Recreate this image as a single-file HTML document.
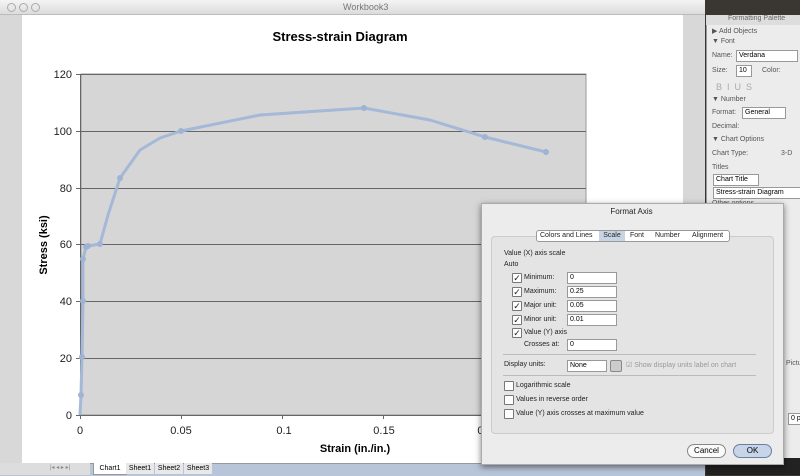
<!DOCTYPE html>
<html><head><meta charset="utf-8"><style>
body{margin:0;width:800px;height:475px;overflow:hidden;background:#3a3632;font-family:"Liberation Sans",Verdana,sans-serif;position:relative}
.a{position:absolute}
.t{font-size:8px;color:#222}
.cb{position:absolute;width:8px;height:8px;border:1px solid #777;background:#fff;border-radius:1px}
.ck{position:absolute;width:8px;height:8px;border:1px solid #777;background:#fff;border-radius:1px;font-size:9px;line-height:8px;text-align:center;color:#223}
.inp{position:absolute;background:#fff;border:1px solid #999;height:10px;font-size:7px;padding-left:2px;line-height:10px}
.p{font-size:7px;color:#555;position:absolute}
</style></head><body>
<!-- window -->
<div class="a" style="left:0;top:0;width:705px;height:475px;background:#d8d8d8"></div>
<div class="a" style="left:0;top:0;width:705px;height:14px;background:linear-gradient(#f4f4f4,#dcdcdc);border-bottom:1px solid #bbb"></div>
<div class="a" style="left:7px;top:3px;width:7px;height:7px;border:1px solid #aaa;border-radius:50%"></div>
<div class="a" style="left:19px;top:3px;width:7px;height:7px;border:1px solid #aaa;border-radius:50%"></div>
<div class="a" style="left:31px;top:3px;width:7px;height:7px;border:1px solid #aaa;border-radius:50%"></div>
<div class="a" style="left:343px;top:2px;font-size:9px;color:#777">Workbook3</div>
<div class="a" style="left:22px;top:15px;width:661px;height:448px;background:#fff"></div>
<svg class="a" style="left:0;top:0" width="705" height="475">
<rect x="81" y="74" width="505" height="341" fill="#d6d6d6" stroke="#999" stroke-width="1"/>
<g stroke="#666" stroke-width="1">
<line x1="76" y1="74.5" x2="586" y2="74.5"/><line x1="76" y1="131.5" x2="586" y2="131.5"/><line x1="76" y1="188.5" x2="586" y2="188.5"/><line x1="76" y1="244.5" x2="586" y2="244.5"/><line x1="76" y1="301.5" x2="586" y2="301.5"/><line x1="76" y1="358.5" x2="586" y2="358.5"/><line x1="76" y1="415.5" x2="586" y2="415.5"/>
<line x1="80.5" y1="74" x2="80.5" y2="419"/>
<line x1="181.5" y1="415" x2="181.5" y2="419"/><line x1="282.5" y1="415" x2="282.5" y2="419"/><line x1="383.5" y1="415" x2="383.5" y2="419"/><line x1="484.5" y1="415" x2="484.5" y2="419"/>
</g>
<polyline fill="none" stroke="#a4b8d8" stroke-width="3" stroke-linejoin="round" points="80,415 81,395 82,357 83,301 83,259 86,247 88,246 100,244 108,215 120,178 140,150 160,138 181,131 260,115 364,108 430,120 485,137 546,152"/>
<g fill="#9fb3d4">
<circle cx="81" cy="395" r="3"/><circle cx="82" cy="357" r="3"/><circle cx="83" cy="301" r="3"/><circle cx="83" cy="259" r="3"/><circle cx="86" cy="247" r="3"/><circle cx="88" cy="246" r="3"/><circle cx="100" cy="244" r="3"/><circle cx="120" cy="178" r="3"/><circle cx="181" cy="131" r="3"/><circle cx="364" cy="108" r="3"/><circle cx="485" cy="137" r="3"/><circle cx="546" cy="152" r="3"/>
</g>
<g font-family="Liberation Sans,sans-serif" font-size="11" fill="#222" text-anchor="end">
<text x="72" y="78">120</text><text x="72" y="135">100</text><text x="72" y="192">80</text><text x="72" y="248">60</text><text x="72" y="305">40</text><text x="72" y="362">20</text><text x="72" y="419">0</text>
</g>
<g font-family="Liberation Sans,sans-serif" font-size="11" fill="#222" text-anchor="middle">
<text x="80" y="434">0</text><text x="181" y="434">0.05</text><text x="284" y="434">0.1</text><text x="384" y="434">0.15</text><text x="485" y="434">0.2</text>
</g>
<text x="340" y="41" font-family="Liberation Sans,sans-serif" font-weight="bold" font-size="13" text-anchor="middle">Stress-strain Diagram</text>
<text x="355" y="452" font-family="Liberation Sans,sans-serif" font-weight="bold" font-size="11" text-anchor="middle">Strain (in./in.)</text>
<text transform="translate(47,245) rotate(-90)" font-family="Liberation Sans,sans-serif" font-weight="bold" font-size="11" text-anchor="middle">Stress (ksi)</text>
</svg>
<!-- tabs bar -->
<div class="a" style="left:0;top:463px;width:705px;height:12px;background:#b8c4d8;border-top:1px solid #999"></div>
<div class="a" style="left:0;top:463px;width:90px;height:12px;background:#ddd"></div>
<div class="a" style="left:50px;top:464px;font-size:6px;color:#888">|◂ ◂ ▸ ▸|</div>
<div class="a" style="left:93px;top:463px;width:32px;height:11px;background:#fff;font-size:7px;text-align:center;line-height:11px;border:1px solid #999;border-top:none">Chart1</div>
<div class="a" style="left:126px;top:463px;width:28px;height:11px;background:#e8e8e8;font-size:7px;text-align:center;line-height:11px">Sheet1</div>
<div class="a" style="left:155px;top:463px;width:28px;height:11px;background:#e8e8e8;font-size:7px;text-align:center;line-height:11px">Sheet2</div>
<div class="a" style="left:184px;top:463px;width:28px;height:11px;background:#e8e8e8;font-size:7px;text-align:center;line-height:11px">Sheet3</div>
<!-- palette -->
<div class="a" style="left:706px;top:15px;width:94px;height:460px;background:#ececec;border-left:1px solid #999"></div>
<div class="a" style="left:706px;top:15px;width:94px;height:10px;background:#ddd;font-size:7px;color:#666;padding-left:22px;box-sizing:border-box">Formatting Palette</div>
<div class="p" style="left:712px;top:27px">▶ Add Objects</div>
<div class="p" style="left:712px;top:38px">▼ Font</div>
<div class="p" style="left:712px;top:52px">Name:</div><div class="inp" style="left:736px;top:50px;width:58px">Verdana</div>
<div class="p" style="left:712px;top:67px">Size:</div><div class="inp" style="left:736px;top:65px;width:12px">10</div><div class="p" style="left:762px;top:67px">Color:</div>
<div class="p" style="left:716px;top:82px;font-size:9px;color:#aaa">B &nbsp;I &nbsp;U &nbsp;S</div>
<div class="p" style="left:712px;top:96px">▼ Number</div>
<div class="p" style="left:712px;top:109px">Format:</div><div class="inp" style="left:742px;top:107px;width:40px">General</div>
<div class="p" style="left:712px;top:123px">Decimal:</div>
<div class="p" style="left:712px;top:136px">▼ Chart Options</div>
<div class="p" style="left:712px;top:150px">Chart Type:</div><div class="p" style="left:781px;top:150px">3-D</div>
<div class="p" style="left:712px;top:164px">Titles</div>
<div class="inp" style="left:713px;top:174px;width:42px">Chart Title</div>
<div class="inp" style="left:713px;top:187px;width:84px">Stress-strain Diagram</div>
<div class="p" style="left:712px;top:200px">Other options</div>
<div class="p" style="left:786px;top:360px">Pictur</div>
<div class="inp" style="left:788px;top:413px;width:12px">0 p</div>
<div class="a" style="left:706px;top:458px;width:94px;height:17px;background:#222"></div>
<!-- dialog -->
<div class="a" style="left:481px;top:203px;width:301px;height:260px;background:#ececec;border:1px solid #aaa;box-shadow:0 2px 6px rgba(0,0,0,.5)"></div>
<div class="a" style="left:481px;top:207px;width:301px;text-align:center;font-size:8px;color:#222">Format Axis</div>
<div class="a" style="left:491px;top:236px;width:281px;height:196px;background:#e4e4e4;border:1px solid #ccc;border-radius:4px"></div>
<div class="a" style="left:536px;top:230px;width:192px;height:10px;background:#fff;border:1px solid #999;border-radius:3px;font-size:7px;line-height:10px;color:#222">
<span class="a" style="left:3px">Colors and Lines</span><span class="a" style="left:62px;width:26px;background:#c8d4e4;text-align:center">Scale</span><span class="a" style="left:93px">Font</span><span class="a" style="left:118px">Number</span><span class="a" style="left:155px">Alignment</span></div>
<div class="a t" style="left:504px;top:250px;font-size:7px">Value (X) axis scale</div>
<div class="a t" style="left:504px;top:261px;font-size:7px">Auto</div>
<div class="ck" style="left:512px;top:273px">✓</div><div class="a t" style="left:524px;top:274px;font-size:7px">Minimum:</div><div class="inp" style="left:567px;top:272px;width:46px">0</div>
<div class="ck" style="left:512px;top:287px">✓</div><div class="a t" style="left:524px;top:288px;font-size:7px">Maximum:</div><div class="inp" style="left:567px;top:286px;width:46px">0.25</div>
<div class="ck" style="left:512px;top:301px">✓</div><div class="a t" style="left:524px;top:302px;font-size:7px">Major unit:</div><div class="inp" style="left:567px;top:300px;width:46px">0.05</div>
<div class="ck" style="left:512px;top:315px">✓</div><div class="a t" style="left:524px;top:316px;font-size:7px">Minor unit:</div><div class="inp" style="left:567px;top:314px;width:46px">0.01</div>
<div class="ck" style="left:512px;top:328px">✓</div><div class="a t" style="left:524px;top:329px;font-size:7px">Value (Y) axis</div>
<div class="a t" style="left:524px;top:341px;font-size:7px">Crosses at:</div><div class="inp" style="left:567px;top:339px;width:46px">0</div>
<div class="a" style="left:503px;top:354px;width:253px;border-top:1px solid #bbb"></div>
<div class="a t" style="left:504px;top:361px;font-size:7px">Display units:</div><div class="inp" style="left:567px;top:360px;width:36px">None</div>
<div class="a" style="left:610px;top:360px;width:10px;height:10px;border:1px solid #888;background:#ccc;border-radius:2px"></div>
<div class="a" style="left:626px;top:361px;font-size:7px;color:#999">☑ Show display units label on chart</div>
<div class="a" style="left:503px;top:375px;width:253px;border-top:1px solid #bbb"></div>
<div class="cb" style="left:504px;top:381px"></div><div class="a t" style="left:516px;top:382px;font-size:7px">Logarithmic scale</div>
<div class="cb" style="left:504px;top:395px"></div><div class="a t" style="left:516px;top:396px;font-size:7px">Values in reverse order</div>
<div class="cb" style="left:504px;top:409px"></div><div class="a t" style="left:516px;top:410px;font-size:7px">Value (Y) axis crosses at maximum value</div>
<div class="a" style="left:687px;top:444px;width:37px;height:12px;border:1px solid #888;border-radius:7px;background:#fafafa;font-size:8px;text-align:center;line-height:12px">Cancel</div>
<div class="a" style="left:733px;top:444px;width:37px;height:12px;border:1px solid #6a7fa0;border-radius:7px;background:#c8d4e8;font-size:8px;text-align:center;line-height:12px">OK</div>
</body></html>
